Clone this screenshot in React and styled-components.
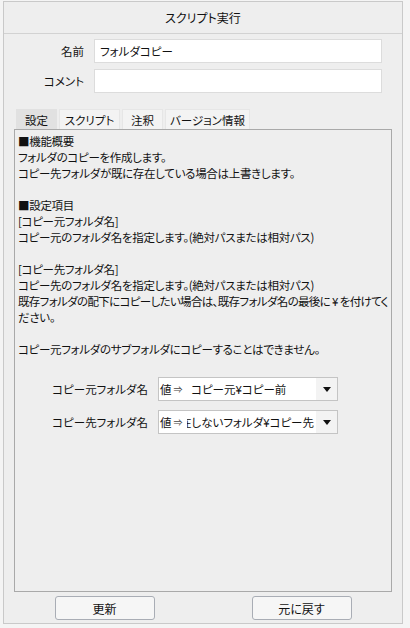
import { Fragment } from 'react';
import styled, { createGlobalStyle } from 'styled-components';

const Global = createGlobalStyle`
  body {
    margin: 0;
    background: #f4f4f4;
    font-family: "Noto Sans CJK JP", "Noto Sans", sans-serif;
    font-size: 11.5px;
    color: #111;
    font-feature-settings: "palt";
  }
`;

const Window = styled.div`
  box-sizing: border-box;
  width: 400px;
  height: 623px;
  margin: 1px 0 0 3px;
  border: 1px solid #c9c9c9;
  background: #eeeeee;
  display: flex;
  flex-direction: column;
`;

const Header = styled.div`
  height: 31px;
  border-bottom: 1px solid #d2d2d2;
  display: flex;
  align-items: center;
  justify-content: center;
  font-size: 12px;
`;

const Form = styled.div`
  display: grid;
  grid-template-columns: 80px 288px;
  column-gap: 10px;
  row-gap: 6px;
  padding: 5px 0 0 0;
  align-items: center;
`;

const Label = styled.div`
  text-align: right;
  white-space: nowrap;
`;

const TextBox = styled.div`
  box-sizing: border-box;
  height: 24px;
  background: #fff;
  border: 1px solid #dcdcdc;
  padding: 0 5px;
  display: flex;
  align-items: center;
`;

const Tabs = styled.div`
  display: flex;
  gap: 2px;
  margin: 16px 0 0 12px;
  height: 20px;
`;

const Tab = styled.div`
  box-sizing: border-box;
  width: ${(p) => p.w}px;
  display: flex;
  align-items: center;
  justify-content: center;
  white-space: nowrap;
  background: ${(p) => (p.active ? '#e1e1e1' : '#f3f3f3')};
  border: 1px solid ${(p) => (p.active ? '#e1e1e1' : '#e6e6e6')};
  border-bottom: none;
`;

const Panel = styled.div`
  box-sizing: border-box;
  width: 378px;
  height: 463px;
  margin-left: 10px;
  border: 1px solid #a9a9a9;
  padding: 3px 0 0 3px;
  overflow: hidden;
`;

const Line = styled.div`
  height: 16px;
  line-height: 16px;
  white-space: nowrap;
  letter-spacing: ${(p) => (p.$tight ? -0.65 : -0.3)}px;
`;

const Params = styled.div`
  display: grid;
  grid-template-columns: 130px 180px;
  column-gap: 10px;
  row-gap: 9px;
  margin-top: 20px;
  align-items: center;
`;

const Select = styled.div`
  box-sizing: border-box;
  height: 24px;
  background: #fff;
  border: 1px solid #c4c4c4;
  display: flex;
  align-items: stretch;
`;

const Prefix = styled.div`
  width: 27px;
  flex: none;
  display: flex;
  align-items: center;
  padding-left: 1px;
  white-space: nowrap;
  span {
    font-size: 9px;
    margin-left: 2px;
    color: #444;
  }
`;

const Value = styled.div`
  flex: 1;
  overflow: hidden;
  display: flex;
  align-items: center;
  justify-content: ${(p) => (p.$end ? 'flex-end' : 'flex-start')};
  white-space: nowrap;
  padding-left: ${(p) => (p.$end ? 0 : 4)}px;
  padding-right: 2px;
`;

const Arrow = styled.div`
  width: 21px;
  flex: none;
  background: #f3f3f3;
  display: flex;
  align-items: center;
  justify-content: center;
`;

const Footer = styled.div`
  display: grid;
  grid-template-columns: 1fr 1fr;
  justify-items: center;
  margin-top: 4px;
  padding: 0 2px;
`;

const Button = styled.button`
  box-sizing: border-box;
  width: 100px;
  height: 24px;
  background: #f6f6f6;
  border: 1px solid #a9adb5;
  border-radius: 3px;
  font-family: inherit;
  font-size: 12px;
  color: #111;
  font-feature-settings: "palt";
  padding: 0;
`;

const Tri = () => (
  <svg width="8" height="5" viewBox="0 0 8 5">
    <polygon points="0,0 8,0 4,5" fill="#111" />
  </svg>
);

const text = [
  '■機能概要',
  'フォルダのコピーを作成します。',
  'コピー先フォルダが既に存在している場合は上書きします。',
  '',
  '■設定項目',
  '[コピー元フォルダ名]',
  'コピー元のフォルダ名を指定します。(絶対パスまたは相対パス)',
  '',
  '[コピー先フォルダ名]',
  'コピー先のフォルダ名を指定します。(絶対パスまたは相対パス)',
  '既存フォルダの配下にコピーしたい場合は、既存フォルダ名の最後に ¥ を付けてく',
  'ださい。',
  '',
  'コピー元フォルダのサブフォルダにコピーすることはできません。',
];

const params = [
  { label: 'コピー元フォルダ名', value: 'コピー元¥コピー前' },
  { label: 'コピー先フォルダ名', value: '存在しないフォルダ¥コピー先', end: true },
];

export default function App() {
  return (
    <>
      <Global />
      <Window>
        <Header>スクリプト実行</Header>
        <Form>
          <Label>名前</Label>
          <TextBox>フォルダコピー</TextBox>
          <Label>コメント</Label>
          <TextBox />
        </Form>
        <Tabs>
          <Tab w={41} active>設定</Tab>
          <Tab w={61}>スクリプト</Tab>
          <Tab w={41}>注釈</Tab>
          <Tab w={85}>バージョン情報</Tab>
        </Tabs>
        <Panel>
          {text.map((t, i) => (
            <Line key={i} $tight={t.length > 36}>{t}</Line>
          ))}
          <Params>
            {params.map((p) => (
              <Fragment key={p.label}>
                <Label>{p.label}</Label>
                <Select>
                  <Prefix>
                    値<span>⇒</span>
                  </Prefix>
                  <Value $end={p.end}>{p.value}</Value>
                  <Arrow>
                    <Tri />
                  </Arrow>
                </Select>
              </Fragment>
            ))}
          </Params>
        </Panel>
        <Footer>
          <Button>更新</Button>
          <Button>元に戻す</Button>
        </Footer>
      </Window>
    </>
  );
}
